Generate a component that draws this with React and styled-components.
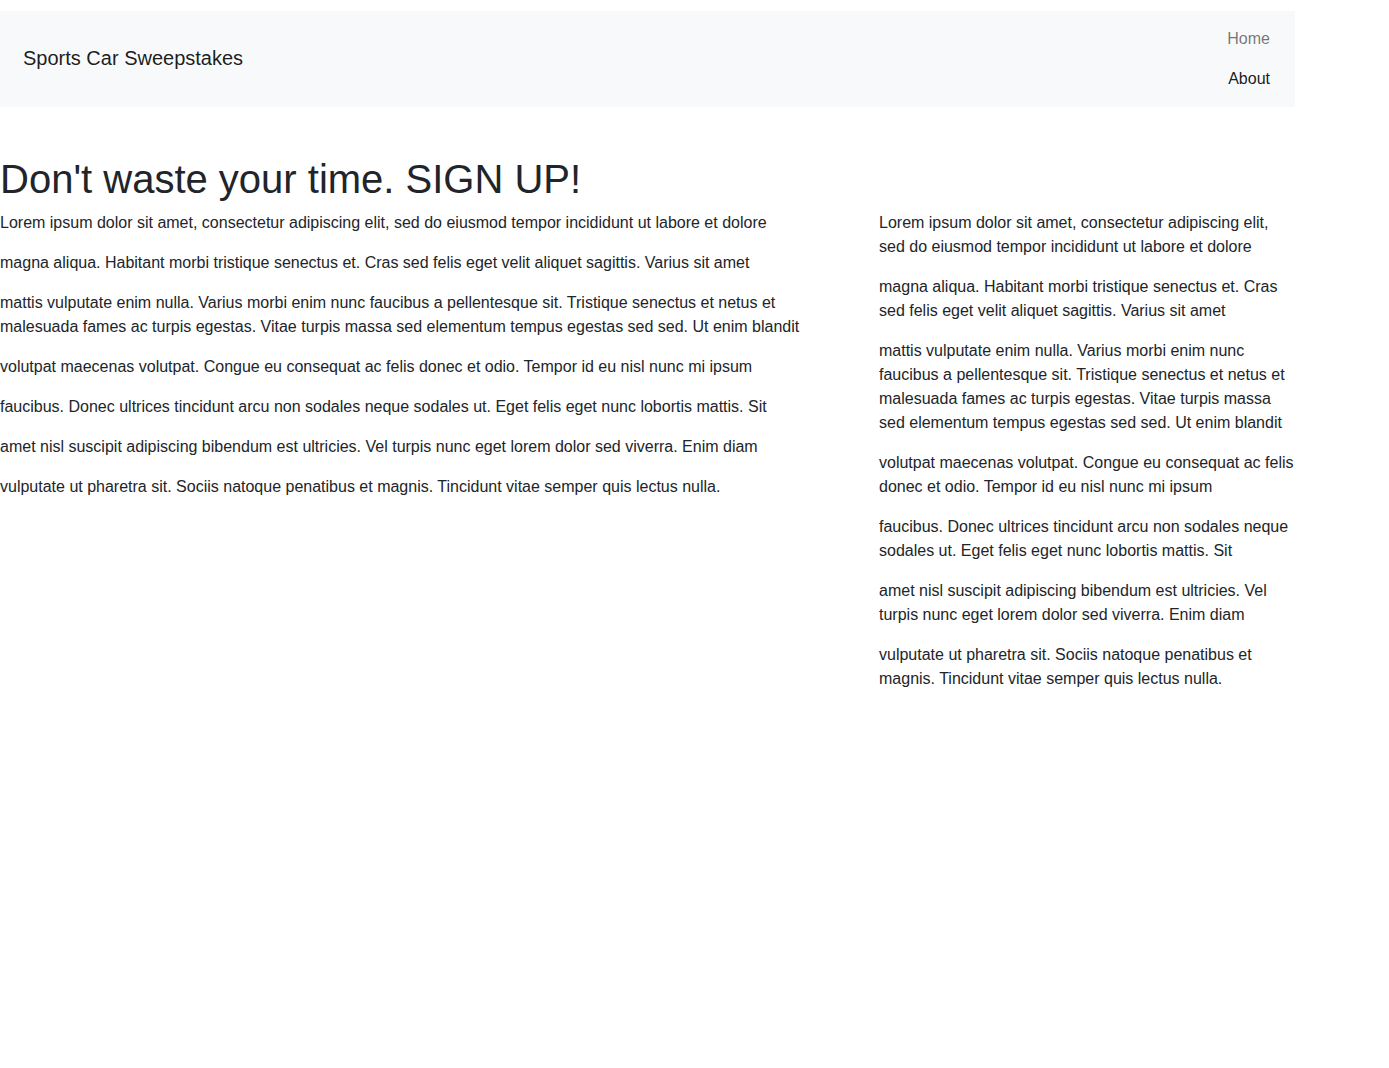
import styled, { createGlobalStyle } from 'styled-components';

const GlobalStyle = createGlobalStyle`
    body {
        margin: 0;
        background: #fff;
        font-family: "Liberation Sans", Arial, sans-serif;
        font-size: 16px;
        line-height: 24px;
        color: #212529;
    }
`;

const Page = styled.div`
    width: 1295px;
    padding-top: 11px;
`;

const Navbar = styled.nav`
    display: flex;
    align-items: center;
    justify-content: space-between;
    background: #f8f9fa;
    height: 96px;
    padding: 0 25px 0 23px;
    box-sizing: border-box;
`;

const Brand = styled.a`
    font-size: 20px;
    line-height: 30px;
    padding-bottom: 2px;
    color: rgba(0, 0, 0, 0.9);
    text-decoration: none;
`;

const NavList = styled.ul`
    list-style: none;
    margin: 0;
    padding: 0;
    display: flex;
    flex-direction: column;
    align-items: flex-end;
`;

const NavLink = styled.a`
    display: block;
    padding: 8px 0;
    line-height: 24px;
    text-decoration: none;
    color: ${props => (props.active ? 'rgba(0, 0, 0, 0.9)' : 'rgba(0, 0, 0, 0.55)')};
`;

const Heading = styled.h1`
    margin: 48px 0 8px;
    font-size: 40px;
    line-height: 48px;
    font-weight: 400;
    color: #212529;
`;

const Columns = styled.div`
    display: grid;
    grid-template-columns: 1fr 416px;
    column-gap: 48px;
`;

const Column = styled.div``;

const Para = styled.p`
    margin: 0 0 16px;
`;

const paragraphs = [
    'Lorem ipsum dolor sit amet, consectetur adipiscing elit, sed do eiusmod tempor incididunt ut labore et dolore',
    'magna aliqua. Habitant morbi tristique senectus et. Cras sed felis eget velit aliquet sagittis. Varius sit amet',
    'mattis vulputate enim nulla. Varius morbi enim nunc faucibus a pellentesque sit. Tristique senectus et netus et malesuada fames ac turpis egestas. Vitae turpis massa sed elementum tempus egestas sed sed. Ut enim blandit',
    'volutpat maecenas volutpat. Congue eu consequat ac felis donec et odio. Tempor id eu nisl nunc mi ipsum',
    'faucibus. Donec ultrices tincidunt arcu non sodales neque sodales ut. Eget felis eget nunc lobortis mattis. Sit',
    'amet nisl suscipit adipiscing bibendum est ultricies. Vel turpis nunc eget lorem dolor sed viverra. Enim diam',
    'vulputate ut pharetra sit. Sociis natoque penatibus et magnis. Tincidunt vitae semper quis lectus nulla.',
];

const App = () => {
    return (
        <Page>
            <GlobalStyle />
            <Navbar>
                <Brand href="#">Sports Car Sweepstakes</Brand>
                <NavList>
                    <li><NavLink href="#">Home</NavLink></li>
                    <li><NavLink href="#" active>About</NavLink></li>
                </NavList>
            </Navbar>
            <Heading>Don't waste your time. SIGN UP!</Heading>
            <Columns>
                <Column>
                    {paragraphs.map((text, i) => <Para key={i}>{text}</Para>)}
                </Column>
                <Column>
                    {paragraphs.map((text, i) => <Para key={i}>{text}</Para>)}
                </Column>
            </Columns>
        </Page>
    );
};

export default App;
